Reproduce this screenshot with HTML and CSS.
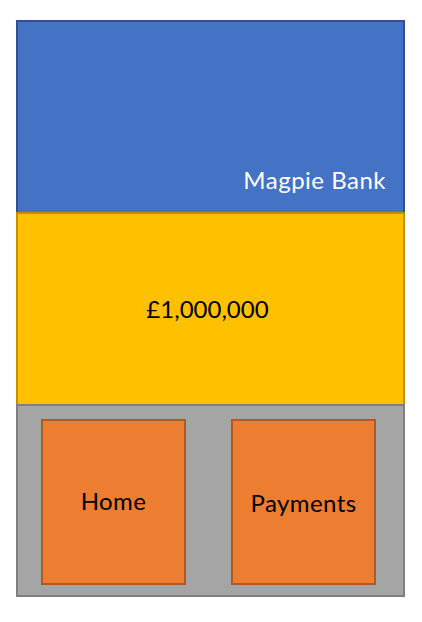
FILE: index.html
```html
<!DOCTYPE html>
<html lang="en">
<head>
  <meta charset="UTF-8">
  <meta name="viewport" content="width=device-width, initial-scale=1.0">
  <title>Magpie Bank</title>
  <link rel="stylesheet" href="styles.css">
</head>
<body>

<div class="phone">
  <!-- Header -->
  <div class="header">
    <span class="bank-name">Magpie Bank</span>
  </div>

  <!-- Balance -->
  <div class="balance">
    <span class="amount">£1,000,000</span>
  </div>

  <!-- Nav buttons -->
  <div class="nav">
    <div class="nav-btn">Home</div>
    <div class="nav-btn nav-btn-low">Payments</div>
  </div>
</div>

</body>
</html>
```

FILE: styles.css
```css
body {
    margin: 0;
    background-color: #fff;
    font-family: Lato, "Open Sans", sans-serif;
}
.phone {
    width: 389px;
    margin: 20px 0 0 16px;
}
.header {
    box-sizing: border-box;
    height: 192px;
    background-color: #4472c4;
    border: 2px solid #2f528f;
    border-bottom: none;
    display: flex;
    align-items: flex-end;
    justify-content: flex-end;
    padding: 0 17px 18px 0;
}
.bank-name {
    color: #fff;
    font-size: 24px;
    letter-spacing: 0.5px;
}
.balance {
    box-sizing: border-box;
    height: 192px;
    background-color: #ffc000;
    border: 2px solid #bf9000;
    border-bottom: none;
    display: flex;
    align-items: center;
    justify-content: center;
    padding-bottom: 2px;
}
.amount {
    color: #000;
    font-size: 24px;
    margin-right: 6px;
}
.nav {
    box-sizing: border-box;
    height: 193px;
    background-color: #a5a5a5;
    border: 2px solid #7f7f7f;
    display: flex;
    gap: 45px;
    padding: 13px 0 0 23px;
}
.nav-btn {
    box-sizing: border-box;
    width: 145px;
    height: 166px;
    background-color: #ed7d31;
    border: 2px solid #ae5a21;
    display: flex;
    align-items: center;
    justify-content: center;
    font-size: 24px;
    letter-spacing: 0.4px;
    color: #000;
    padding-bottom: 3px;
}
.nav-btn-low {
    padding-bottom: 0;
}
```
